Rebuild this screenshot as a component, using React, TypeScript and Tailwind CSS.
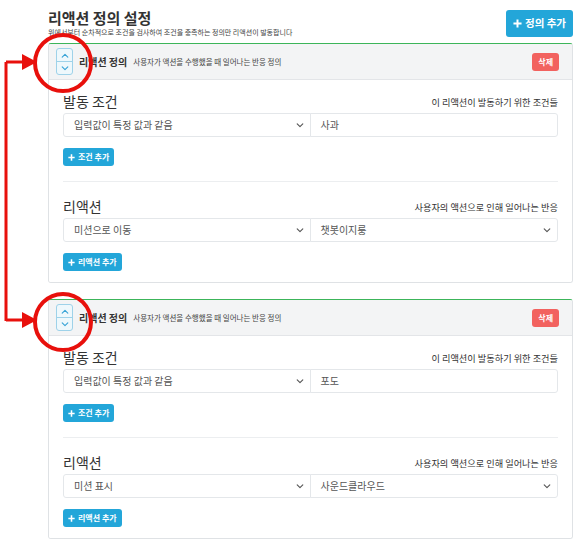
import React from "react";

type Row = { label: string; hint: string; left: string; right: string; rightSelect: boolean; button: string };

type Def = { rows: Row[] };

const defs: Def[] = [
  {
    rows: [
      { label: "발동 조건", hint: "이 리액션이 발동하기 위한 조건들", left: "입력값이 특정 값과 같음", right: "사과", rightSelect: false, button: "조건 추가" },
      { label: "리액션", hint: "사용자의 액션으로 인해 일어나는 반응", left: "미션으로 이동", right: "챗봇이지룽", rightSelect: true, button: "리액션 추가" },
    ],
  },
  {
    rows: [
      { label: "발동 조건", hint: "이 리액션이 발동하기 위한 조건들", left: "입력값이 특정 값과 같음", right: "포도", rightSelect: false, button: "조건 추가" },
      { label: "리액션", hint: "사용자의 액션으로 인해 일어나는 반응", left: "미션 표시", right: "사운드클라우드", rightSelect: true, button: "리액션 추가" },
    ],
  },
];

const font = { fontFamily: '"Noto Sans CJK KR", "Noto Sans", sans-serif' };

function Chevron({ className, up }: { className?: string; up?: boolean }) {
  return (
    <svg viewBox="0 0 10 6" fill="none" stroke="currentColor" strokeWidth="1.4" strokeLinecap="round" strokeLinejoin="round" className={className} aria-hidden>
      {up ? <path d="M1.5 5L5 1.5 8.5 5" /> : <path d="M1.5 1L5 4.5 8.5 1" />}
    </svg>
  );
}

function Plus({ className }: { className?: string }) {
  return (
    <svg viewBox="0 0 10 10" fill="none" stroke="currentColor" strokeWidth="2.2" className={className} aria-hidden>
      <path d="M5 0.5v9M0.5 5h9" />
    </svg>
  );
}

function SmallButton({ label }: { label: string }) {
  return (
    <button className="flex h-[18px] items-center gap-[3px] rounded-[3px] bg-[#23a6d9] px-[5px] text-[8px] font-bold leading-none text-white">
      <Plus className="h-[7px] w-[7px]" />
      {label}
    </button>
  );
}

function Field({ text, select, side }: { text: string; select: boolean; side: "l" | "r" }) {
  return (
    <div
      className={`flex h-[24px] items-center justify-between border border-[#e4e7ea] bg-white pl-[10px] pr-[6px] text-[10px] leading-none text-[#555] ${
        side === "l" ? "rounded-l-[3px]" : "-ml-px rounded-r-[3px]"
      }`}
    >
      <span>{text}</span>
      {select && <Chevron className="h-[5px] w-[8px] text-[#555]" />}
    </div>
  );
}

function DefCard({ def }: { def: Def }) {
  return (
    <div className="overflow-hidden rounded-[3px] border border-[#dfe2e5] border-t-[#3cb55a]">
      <div className="flex h-[36px] items-center border-b border-[#e3e5e8] bg-[#f3f4f5] pl-[7px] pr-[13px] leading-none">
        <div className="flex h-[27px] w-[17px] flex-col overflow-hidden rounded-[3px] border border-[#9ed2e9] bg-[#eef8fc]">
          <div className="flex flex-1 items-center justify-center border-b border-[#9ed2e9]">
            <Chevron up className="h-[5px] w-[8px] text-[#36a3d6]" />
          </div>
          <div className="flex flex-1 items-center justify-center">
            <Chevron className="h-[5px] w-[8px] text-[#36a3d6]" />
          </div>
        </div>
        <span className="ml-[6px] text-[10px] font-bold text-[#333]">리액션 정의</span>
        <span className="ml-[6px] text-[7.5px] text-[#444]">사용자가 액션을 수행했을 때 일어나는 반응 정의</span>
        <button className="ml-auto flex h-[18px] items-center rounded-[3px] bg-[#f2625f] px-[6px] text-[8px] font-bold text-white">삭제</button>
      </div>
      <div className="bg-white px-[14px] pb-[11px] pt-[11px]">
        {def.rows.map((row, i) => (
          <div key={row.label} className={i > 0 ? "mt-[15px] border-t border-[#eceef0] pt-[14px]" : ""}>
            <div className="flex h-[20px] items-center justify-between">
              <span className="text-[14px] leading-[20px] text-[#333]">{row.label}</span>
              <span className="pt-[2px] text-[9.2px] leading-[14px] text-[#333]">{row.hint}</span>
            </div>
            <div className="mt-[2px] grid grid-cols-2">
              <Field text={row.left} select side="l" />
              <Field text={row.right} select={row.rightSelect} side="r" />
            </div>
            <div className="mt-[11px] flex">
              <SmallButton label={row.button} />
            </div>
          </div>
        ))}
      </div>
    </div>
  );
}

export default function App() {
  return (
    <div className="relative h-[550px] w-[583px] overflow-hidden bg-white" style={font}>
      <div className="pl-[48px] pr-[10px] pt-[10px]">
        <div className="flex h-[27px] items-start justify-between">
          <div>
            <div className="text-[15px] font-bold leading-[16px] text-[#333]">리액션 정의 설정</div>
            <div className="mt-[1px] text-[7px] leading-[10px] text-[#444]">
              위에서부터 순차적으로 조건을 검사하여 조건을 충족하는 정의만 리액션이 발동합니다
            </div>
          </div>
          <button className="flex h-[27px] items-center gap-[3px] rounded-[3px] bg-[#23a6d9] px-[7px] text-[10.5px] font-bold leading-none text-white">
            <Plus className="h-[9px] w-[9px]" />
            정의 추가
          </button>
        </div>
        <div className="mt-[6px] flex flex-col gap-[16px]">
          {defs.map((d, i) => (
            <DefCard key={i} def={d} />
          ))}
        </div>
      </div>

      <svg className="pointer-events-none absolute left-0 top-0" width="583" height="550" aria-hidden>
        <g stroke="#e8100c" fill="none">
          <path d="M6 62V321" strokeWidth="3" />
          <path d="M6 62H26" strokeWidth="3" />
          <path d="M6 320H26" strokeWidth="3" />
          <circle cx="63" cy="63" r="28" strokeWidth="4" />
          <circle cx="63" cy="322" r="28" strokeWidth="4" />
        </g>
        <g fill="#e8100c">
          <polygon points="22,54 37,62 22,70" />
          <polygon points="22,312 37,320 22,328" />
        </g>
      </svg>
    </div>
  );
}
